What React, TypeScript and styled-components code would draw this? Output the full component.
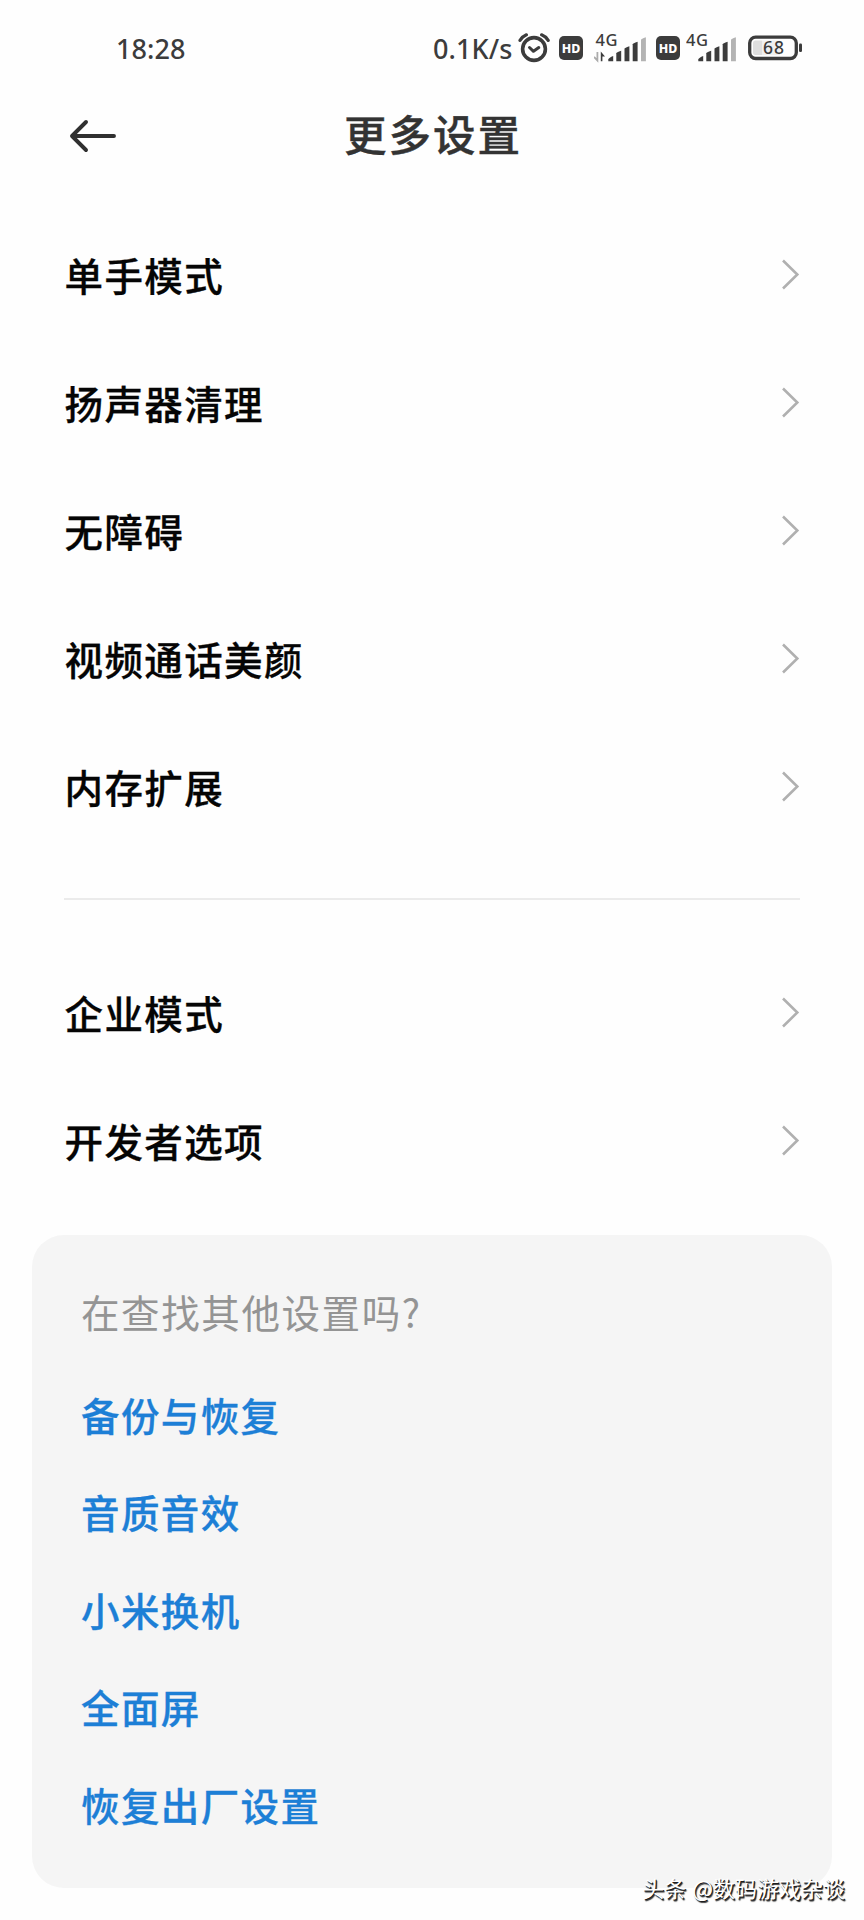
import React from 'react';
import styled, { createGlobalStyle } from 'styled-components';

const GlobalStyle = createGlobalStyle`
  *, *::before, *::after { box-sizing: border-box; }
  body {
    margin: 0;
    background: #fefefe;
    font-family: 'Noto Sans CJK SC', 'Noto Sans', sans-serif;
  }
`;

const Screen = styled.main`
  position: relative;
  width: 864px;
  height: 1920px;
  overflow: hidden;
  background: #fefefe;
  display: flex;
  flex-direction: column;
`;

const StatusBar = styled.header`
  height: 96px;
  flex: none;
  display: flex;
  align-items: center;
  justify-content: space-between;
  padding: 0 61px 0 116px;
  font-family: 'Noto Sans', sans-serif;
  font-size: 27px;
  font-weight: 500;
  line-height: 40px;
  color: #3c3c3c;
`;

const Clock = styled.time`
  padding-top: 2px;
  letter-spacing: 0.1px;
`;

const StatusGroup = styled.div`
  display: flex;
  align-items: center;
`;

const Speed = styled.span`
  width: 85px;
  padding-top: 2px;
  letter-spacing: 0.1px;
  white-space: nowrap;
`;

const StatusIcon = styled.svg<{ $gap?: number }>`
  display: block;
  flex: none;
  margin-left: ${({ $gap = 0 }) => $gap}px;
`;

const IconText = styled.text`
  font-family: 'Noto Sans', sans-serif;
`;

const TitleBar = styled.div`
  height: 78px;
  flex: none;
  display: grid;
  grid-template-columns: 120px 1fr 120px;
  align-items: center;
`;

const BackButton = styled.button`
  border: 0;
  padding: 2px 0 0 68px;
  background: none;
  display: flex;
`;

const Title = styled.h1`
  margin: 0;
  padding: 0 0 5px 2px;
  text-align: center;
  font-size: 42.5px;
  line-height: 60px;
  font-weight: 500;
  letter-spacing: 2px;
  -webkit-text-stroke: 0.4px #333;
  color: #333;
`;

const Group = styled.section<{ $top: number }>`
  display: flex;
  flex-direction: column;
  flex: none;
  padding: 0 64px;
  margin-top: ${({ $top }) => $top}px;
`;

const Row = styled.div`
  height: 128px;
  display: flex;
  align-items: center;
  justify-content: space-between;
`;

const RowLabel = styled.span`
  padding: 0 0 3px 0.5px;
  font-size: 38.5px;
  line-height: 56px;
  font-weight: 500;
  letter-spacing: 1.4px;
  -webkit-text-stroke: 0.3px #050505;
  color: #050505;
`;

const Divider = styled.hr`
  flex: none;
  width: 736px;
  height: 2px;
  margin: 47px 64px 0;
  border: 0;
  background: #ebebeb;
`;

const Card = styled.section`
  flex: none;
  height: 653px;
  margin: 30px 32px 0;
  padding: 39px 49px;
  border-radius: 32px;
  background: #f5f5f5;
`;

const CardTitle = styled.p`
  margin: 0 0 17.5px;
  height: 74px;
  line-height: 74px;
  font-size: 38.5px;
  letter-spacing: 1.6px;
  color: #949494;
`;

const CardLink = styled.a`
  display: block;
  height: 97.6px;
  line-height: 97.6px;
  font-size: 38.5px;
  font-weight: 500;
  letter-spacing: 1.4px;
  -webkit-text-stroke: 0.3px #1d7fd6;
  color: #1d7fd6;
`;

const Watermark = styled.span`
  position: absolute;
  right: 19px;
  bottom: 17px;
  font-size: 22px;
  line-height: 32px;
  color: #fff;
  white-space: nowrap;
  word-spacing: 1px;
  text-shadow: 1px 1px 0 #1c1c1c, 1.5px 1.5px 1px #333;
`;

const AlarmIcon = () => (
  <StatusIcon width="32" height="32" viewBox="0 0 32 32" fill="none" stroke="#3c3c3c" strokeLinecap="round">
    <circle cx="16" cy="17" r="11.4" strokeWidth="3.6" />
    <path d="M11.5 15.5L15.5 19.3L20.8 15.5" strokeWidth="3" strokeLinejoin="round" />
    <path d="M2 8.3Q4.5 4.4 8.4 2.8M23.6 2.8Q27.8 4.4 30.2 8.3" strokeWidth="3.2" />
  </StatusIcon>
);

const HdIcon = ({ gap }: { gap: number }) => (
  <StatusIcon $gap={gap} width="24" height="24" viewBox="0 0 24 24">
    <rect width="24" height="24" rx="5" fill="#3c3c3c" />
    <IconText x="2.8" y="16.5" textLength="18.6" lengthAdjust="spacingAndGlyphs" fontSize="12" fontWeight="800" fill="#fff">HD</IconText>
  </StatusIcon>
);

const SignalIcon = ({ gap, data }: { gap: number; data?: boolean }) => (
  <StatusIcon $gap={gap} width="52" height="40" viewBox="0 -5 52 40">
    <IconText x={data ? 1.5 : 0} y="12.8" textLength="22" fontSize="16.5" fontWeight="500" fill="#3c3c3c">4G</IconText>
    {data && (
      <>
        <path d="M3.4 19v8.5L0 24" fill="none" stroke="#ababab" strokeWidth="1.8" />
        <path d="M6.8 28.3V18.5L11 23.5H8.4V28.3Z" fill="#3c3c3c" />
      </>
    )}
    <g transform={`translate(${data ? 14 : 12} 0)`} fill="#3c3c3c">
      <path d="M.3 28.3V26.5Q1 24.5 5.2 23V28.3Z" />
      <path d="M8.3 28.3V20.3Q8.3 19.3 13.2 17.8V28.3Z" />
      <path d="M16.5 28.3V15.8Q16.5 14.8 21.4 13.3V28.3Z" />
      <path d="M24.7 28.3V11.3Q24.7 10.3 29.6 8.8V28.3Z" />
      <path d="M33 28.3V6.8Q33 5.8 37.9 4.3V28.3Z" fill="#b3b3b3" />
    </g>
  </StatusIcon>
);

const BatteryIcon = () => (
  <StatusIcon $gap={10} width="55" height="26" viewBox="0 0 55 26">
    <rect x="1.7" y="2.1" width="46.6" height="21.4" rx="6" fill="none" stroke="#3c3c3c" strokeWidth="3.3" />
    <path d="M7.5 5.5H14V20H7.5Q5 20 5 17.5V8Q5 5.5 7.5 5.5Z" fill="#dedede" />
    <rect x="14" y="5.5" width="18" height="14.5" fill="#f0f0f0" />
    <rect x="51" y="8.5" width="3" height="8.5" rx="1.2" fill="#3c3c3c" />
    <IconText x="25.5" y="19.3" textAnchor="middle" textLength="21" fontSize="17.5" fontWeight="500" fill="#3c3c3c">68</IconText>
  </StatusIcon>
);

const BackIcon = () => (
  <svg width="50" height="34" viewBox="0 0 50 34" fill="none" stroke="#303030" strokeWidth="3.9" strokeLinecap="round" strokeLinejoin="round">
    <path d="M18 3L4 17L18 31M4.5 17H46" />
  </svg>
);

const Chevron = () => (
  <svg width="20" height="32" viewBox="0 0 20 32" fill="none" stroke="#b0b0b0" strokeWidth="2.6">
    <path d="M3 1.5L17.3 15.5L3 29.5" />
  </svg>
);

const SettingRow = ({ label }: { label: string }) => (
  <Row>
    <RowLabel>{label}</RowLabel>
    <Chevron />
  </Row>
);

const general = ['单手模式', '扬声器清理', '无障碍', '视频通话美颜', '内存扩展'];
const advanced = ['企业模式', '开发者选项'];
const links = ['备份与恢复', '音质音效', '小米换机', '全面屏', '恢复出厂设置'];

export default function App() {
  return (
    <>
      <GlobalStyle />
      <Screen>
        <StatusBar>
          <Clock>18:28</Clock>
          <StatusGroup>
            <Speed>0.1K/s</Speed>
            <AlarmIcon />
            <HdIcon gap={9} />
            <SignalIcon gap={11} data />
            <HdIcon gap={10} />
            <SignalIcon gap={6} />
            <BatteryIcon />
          </StatusGroup>
        </StatusBar>
        <TitleBar>
          <BackButton aria-label="返回">
            <BackIcon />
          </BackButton>
          <Title>更多设置</Title>
        </TitleBar>
        <Group $top={37}>
          {general.map((label) => (
            <SettingRow key={label} label={label} />
          ))}
        </Group>
        <Divider />
        <Group $top={49}>
          {advanced.map((label) => (
            <SettingRow key={label} label={label} />
          ))}
        </Group>
        <Card>
          <CardTitle>在查找其他设置吗?</CardTitle>
          {links.map((label) => (
            <CardLink key={label}>{label}</CardLink>
          ))}
        </Card>
        <Watermark>头条 @数码游戏杂谈</Watermark>
      </Screen>
    </>
  );
}
